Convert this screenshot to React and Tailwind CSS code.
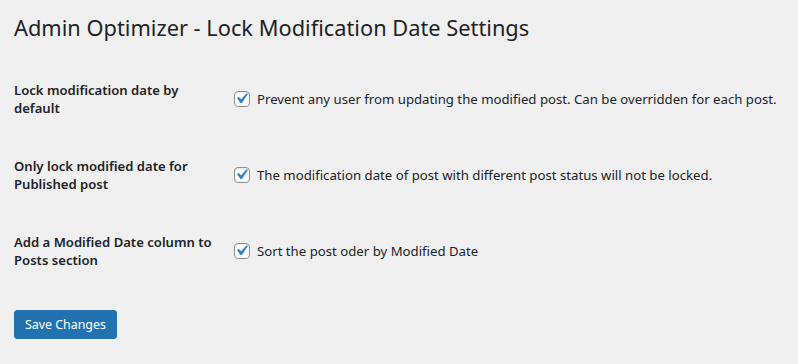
import React from "react";

const rows = [
  {
    label: "Lock modification date by default",
    text: "Prevent any user from updating the modified post. Can be overridden for each post.",
  },
  {
    label: "Only lock modified date for Published post",
    text: "The modification date of post with different post status will not be locked.",
  },
  {
    label: "Add a Modified Date column to Posts section",
    text: "Sort the post oder by Modified Date",
  },
];

const CheckBox = () => (
  <span className="relative mr-[7px] inline-flex h-4 w-4 shrink-0 items-center justify-center rounded-[4px] border border-[#8c8f94] bg-white shadow-[inset_0_1px_2px_rgba(0,0,0,0.1)]">
    <svg viewBox="0 0 20 20" className="absolute -left-[4px] -top-[4px] h-[21px] w-[21px]">
      <path d="M14.83 4.89l1.34.94-5.81 8.38H9.02L5.78 9.67l1.34-1.25 2.57 2.4z" fill="#3582c4" />
    </svg>
  </span>
);

export default function App() {
  return (
    <div
      className="min-h-[364px] bg-[#f0f0f1] px-[14px] text-[#1d2327]"
      style={{ fontFamily: '"Noto Sans", "Open Sans", sans-serif' }}
    >
      <h1 className="pt-[13px] text-[21.8px] font-normal leading-[30px]">
        Admin Optimizer - Lock Modification Date Settings
      </h1>

      <div className="mt-[18px]">
        {rows.map((row) => (
          <div key={row.label} className="flex items-center">
            <div className="mr-[10px] w-[200px] shrink-0 py-5 text-[13.1px] font-semibold leading-[18px]">
              {row.label}
            </div>
            <label className="flex items-center pl-[10px] text-[13.2px] leading-5">
              <CheckBox />
              {row.text}
            </label>
          </div>
        ))}
      </div>

      <button className="mt-[21px] h-[29px] rounded-[3px] border border-[#2271b1] bg-[#2271b1] px-[10px] text-[12.4px] leading-[27px] text-white">
        Save Changes
      </button>
    </div>
  );
}
